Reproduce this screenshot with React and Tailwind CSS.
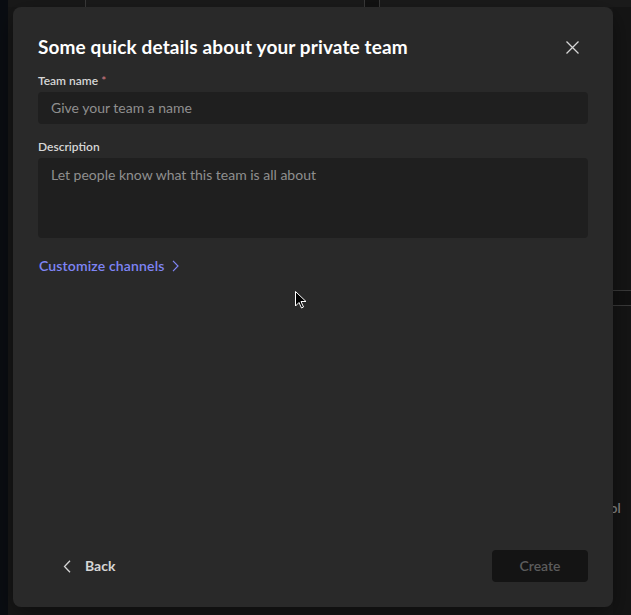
import React from "react";

export default function App() {
  const font = { fontFamily: '"Segoe UI", Lato, "Noto Sans", sans-serif' };
  return (
    <div
      className="relative w-[631px] h-[615px] overflow-hidden bg-[#171717] flex"
      style={font}
    >
      {/* background app */}
      <div className="w-[8px] h-full bg-[#0a0d12]" />
      <div className="flex-1 flex flex-col">
        <div className="h-[7px] flex">
          <div className="w-[77px] bg-[#191919]" />
          <div className="w-px bg-[#3a3a3a]" />
          <div className="w-[278px] bg-[#1b1b1b]" />
          <div className="w-px bg-[#3a3a3a]" />
          <div className="w-[14px] bg-[#121212]" />
          <div className="w-px bg-[#3a3a3a]" />
          <div className="flex-1 bg-[#1b1b1b]" />
        </div>
        <div className="flex-1 flex">
          <div className="flex-1" />
          <div className="w-[18px] flex flex-col bg-[#151515]">
            <div className="h-[283px]" />
            <div className="h-px bg-[#3a3a3a]" />
            <div className="h-[14px] bg-[#111111]" />
            <div className="h-px bg-[#3a3a3a]" />
            <div className="h-[194px]" />
            <div className="text-[13px] font-semibold text-[#8a8a8a] leading-[16px] -ml-[3px]">
              ol
            </div>
          </div>
        </div>
      </div>

      {/* dialog overlay */}
      <div className="absolute left-[13px] top-[7px] w-[600px] h-[600px] rounded-[8px] bg-[#292929] shadow-[0_8px_24px_rgba(0,0,0,0.4)] flex flex-col px-[25px] pt-[28px] pb-[25px]">
        <div className="flex items-center justify-between h-[24px]">
          <h1 className="text-[19px] leading-[24px] font-bold tracking-[0.12px] text-white">
            Some quick details about your private team
          </h1>
          <button className="w-[20px] h-[20px] flex items-center justify-center mr-[6px] text-[#d6d6d6]">
            <svg width="13" height="13" viewBox="0 0 13 13" fill="none">
              <path d="M0.5 0.5 L12.5 12.5 M12.5 0.5 L0.5 12.5" stroke="currentColor" strokeWidth="1.3" />
            </svg>
          </button>
        </div>

        <label className="mt-[14px] text-[12px] leading-[16px] font-semibold text-[#d6d6d6]">
          Team name <span className="text-[#c4737c]">*</span>
        </label>
        <div className="mt-[3px] h-[32px] rounded-[4px] bg-[#1f1f1f] flex items-center px-[13px]">
          <span className="text-[14px] leading-[20px] text-[#8f8f8f]">Give your team a name</span>
        </div>

        <label className="mt-[15px] text-[12px] leading-[16px] font-semibold text-[#d6d6d6]">
          Description
        </label>
        <div className="mt-[3px] h-[80px] rounded-[4px] bg-[#1f1f1f] px-[13px] pt-[4px]">
          <span className="text-[14px] leading-[20px] text-[#8f8f8f]">
            Let people know what this team is all about
          </span>
        </div>

        <div className="mt-[18px] flex items-center gap-[8px] h-[20px] pl-[1px] text-[#7f85f5]">
          <span className="text-[14px] leading-[20px] font-semibold tracking-[0.15px]">Customize channels</span>
          <svg width="7" height="12" viewBox="0 0 7 12" fill="none">
            <path d="M1 0.8 L6 6 L1 11.2" stroke="currentColor" strokeWidth="1.2" />
          </svg>
        </div>

        <div className="flex-1" />

        <div className="flex items-center justify-between h-[32px]">
          <button className="flex items-center gap-[14px] ml-[25px] text-[#d6d6d6]">
            <svg width="8" height="13" viewBox="0 0 8 13" fill="none">
              <path d="M7 0.8 L1.5 6.5 L7 12.2" stroke="currentColor" strokeWidth="1.3" />
            </svg>
            <span className="text-[14px] leading-[20px] font-bold">Back</span>
          </button>
          <button className="w-[96px] h-[32px] rounded-[4px] bg-[#141414] text-[#5c5c5c] text-[14px] leading-[20px] font-semibold">
            Create
          </button>
        </div>
      </div>

      {/* cursor */}
      <svg className="absolute left-[295px] top-[291px]" width="12" height="18" viewBox="0 0 12 18">
        <path d="M0.5 0.5 L0.5 15 L4 11.5 L6.5 17 L8.5 16 L6 10.5 L11 10.5 Z" fill="#000" stroke="#fff" strokeWidth="1" />
      </svg>
    </div>
  );
}
